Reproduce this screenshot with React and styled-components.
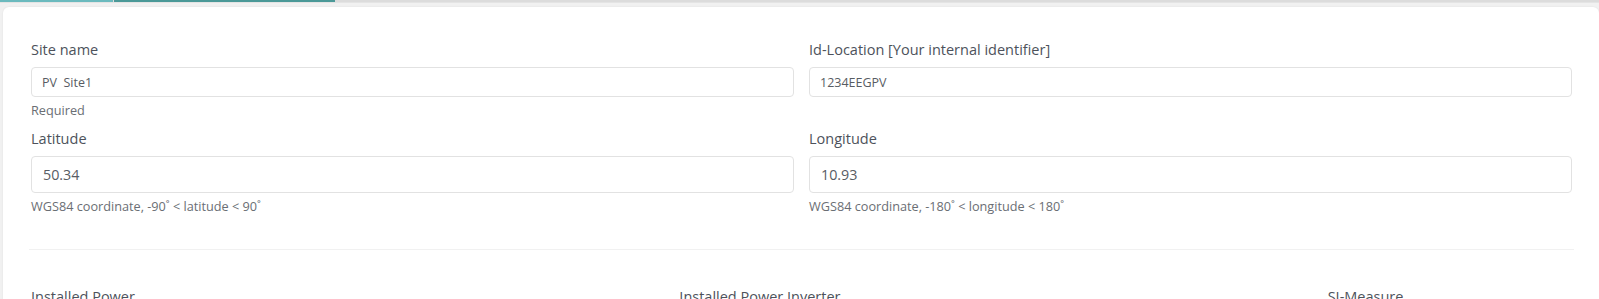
import React from "react";
import styled, { createGlobalStyle } from "styled-components";

const GlobalStyle = createGlobalStyle`
  body {
    margin: 0;
    background-color: #f1f1f1;
    font-family: "Open Sans", "Noto Sans", sans-serif;
  }
`;

const App = () => {
  return (
    <Page>
      <GlobalStyle />
      <TabStrip>
        <TabLine width="113px" color="#6bbabe" />
        <TabLine width="221px" color="#4b9998" />
      </TabStrip>
      <Card>
        <Row>
          <Col span={6}>
            <Label>Site name</Label>
            <Input small defaultValue="PV  Site1" />
            <Help>Required</Help>
          </Col>
          <Col span={6}>
            <Label>Id-Location [Your internal identifier]</Label>
            <Input small defaultValue="1234EEGPV" />
          </Col>
        </Row>
        <Row>
          <Col span={6}>
            <Label>Latitude</Label>
            <Input defaultValue="50.34" />
            <Help>WGS84 coordinate, -90˚ &lt; latitude &lt; 90˚</Help>
          </Col>
          <Col span={6}>
            <Label>Longitude</Label>
            <Input defaultValue="10.93" />
            <Help>WGS84 coordinate, -180˚ &lt; longitude &lt; 180˚</Help>
          </Col>
        </Row>
        <Divider />
        <Row>
          <Col span={5}>
            <Label>Installed Power</Label>
          </Col>
          <Col span={5}>
            <Label>Installed Power Inverter</Label>
          </Col>
          <Col span={2}>
            <Label>SI-Measure</Label>
          </Col>
        </Row>
      </Card>
    </Page>
  );
};

const Page = styled.div`
  height: 299px;
  overflow: hidden;
`;

const TabStrip = styled.div`
  display: flex;
  gap: 1px;
  height: 2px;
  background-color: #dcdcdc;
  border-bottom: 1px solid #e4e4e4;
`;

const TabLine = styled.div`
  width: ${(p) => p.width};
  background-color: ${(p) => p.color};
`;

const Card = styled.div`
  margin: 4px 0 0 3px;
  background-color: #ffffff;
  border-radius: 6px;
  box-shadow: 0 0 2px rgba(0, 0, 0, 0.08);
  padding: 33px 27px 40px 28px;
`;

const Row = styled.div`
  display: flex;
  margin: 0 -7.5px 11px;
`;

const Col = styled.div`
  flex: 0 0 ${(p) => (p.span / 12) * 100}%;
  box-sizing: border-box;
  padding: 0 7.5px;
`;

const Label = styled.div`
  font-size: 14.5px;
  line-height: 20px;
  color: #4d525b;
  margin-bottom: 7px;
`;

const Input = styled.input`
  display: block;
  box-sizing: border-box;
  width: 100%;
  height: ${(p) => (p.small ? "30px" : "37px")};
  padding: 0 ${(p) => (p.small ? "10px" : "11px")};
  font-family: inherit;
  font-size: ${(p) => (p.small ? "12.5px" : "14.3px")};
  color: #585c63;
  background-color: #ffffff;
  border: 1px solid #e2e2e2;
  border-radius: 4px;
  outline: none;
`;

const Help = styled.div`
  margin-top: 5px;
  font-size: 12.7px;
  line-height: 16px;
  color: #6a6e74;
`;

const Divider = styled.hr`
  margin: 35px -2px 37px;
  border: 0;
  border-top: 1px solid #f1f1f1;
`;

export default App;
